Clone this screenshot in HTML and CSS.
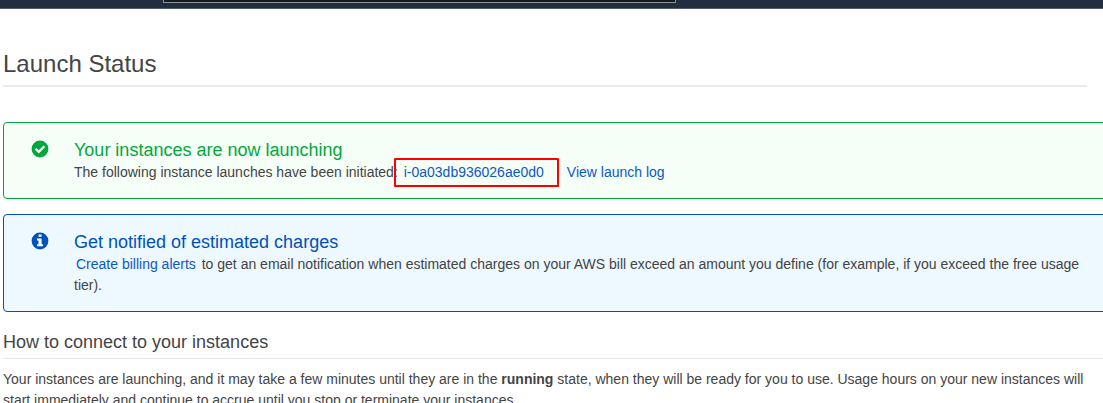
FILE: index.html
```html
<!DOCTYPE html>
<html lang="en">
<head>
<meta charset="utf-8">
<title>Launch Status</title>
<link rel="stylesheet" href="styles.css">
</head>
<body>
<header class="topbar"><div class="search"></div></header>
<main class="content">
  <h1 class="title">Launch Status</h1>
  <section class="alert alert-success">
    <svg class="icon" viewBox="0 0 18 18"><circle cx="9" cy="9" r="8.4" fill="#00a83b"/><path d="M4.5 8.7l3.2 3.2 5.7-5.6" fill="none" stroke="#fff" stroke-width="2.3"/></svg>
    <div class="alert-body">
      <h2 class="alert-title">Your instances are now launching</h2>
      <p class="alert-text">The following instance launches have been initiated: <a class="link instance">i-0a03db936026ae0d0</a><a class="link log">View launch log</a></p>
    </div>
  </section>
  <section class="alert alert-info">
    <svg class="icon" viewBox="0 0 18 18"><circle cx="9" cy="9" r="8.4" fill="#0051ba"/><path d="M7.6 2.4h3v2.4h-3zM6 6.4h4.6v5.8H12v2.1H6v-2.1h1.5V8.5H6z" fill="#fff"/></svg>
    <div class="alert-body">
      <h2 class="alert-title">Get notified of estimated charges</h2>
      <p class="alert-text"><a class="link billing">Create billing alerts</a> to get an email notification when estimated charges on your AWS bill exceed an amount you define (for example, if you exceed the free usage tier).</p>
    </div>
  </section>
  <h2 class="subtitle">How to connect to your instances</h2>
  <p class="para">Your instances are launching, and it may take a few minutes until they are in the <b>running</b> state, when they will be ready for you to use. Usage hours on your new instances will start immediately and continue to accrue until you stop or terminate your instances.</p>
</main>
</body>
</html>
```
FILE: styles.css
```css
* { box-sizing: border-box; }
html, body { margin: 0; height: 403px; overflow: hidden; }
body {
  background: #fff;
  color: #444;
  font: 14px/21px "Liberation Sans", Arial, sans-serif;
}
h1, h2, p { margin: 0; font-weight: 400; }
.topbar { height: 9px; background: #222d40; border-bottom: 1px solid #4b5c68; }
.search {
  width: 513px;
  height: 3px;
  margin-left: 163px;
  background: #161b22;
  border: 1px solid #879596;
  border-top: 0;
  border-radius: 0 0 1px 1px;
}
.content { padding-left: 3px; }
.title {
  width: 1084px;
  height: 78px;
  padding-top: 40px;
  border-bottom: 2px solid #eaeaea;
  font-size: 24px;
  line-height: 30px;
}
.alert {
  display: flex;
  width: 1110px;
  padding: 17px 0 0 27px;
  border: 1px solid;
  border-radius: 4px;
}
.alert-success { height: 77px; margin-top: 35px; background: #f5fff8; border-color: #00a83b; }
.alert-info { height: 98px; margin-top: 15px; background: #edf8ff; border-color: #0051ba; }
.icon { flex: none; width: 18px; height: 18px; margin-right: 25px; }
.alert-body { width: 1014px; }
.alert-title { font-size: 18px; line-height: 21px; }
.alert-text { padding-top: 1px; }
.alert-success .alert-title { color: #00a83b; }
.alert-info .alert-title { color: #0051ba; }
.link { color: #0f57c0; }
.instance {
  margin-left: -8px;
  padding: 4px 13px 5px 8px;
  border: 2px solid #f00;
  border-radius: 1px;
}
.log { margin-left: 8px; }
.billing { padding: 0 2px; }
.subtitle {
  height: 47px;
  padding-top: 19px;
  border-bottom: 1px solid #eaeaea;
  font-size: 18px;
  line-height: 22px;
}
.para { width: 1090px; padding-top: 10px; }
```
